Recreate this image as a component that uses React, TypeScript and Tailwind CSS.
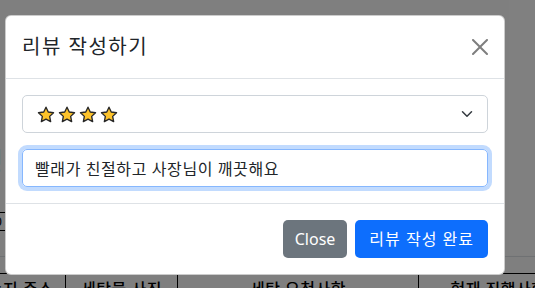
import React from "react";

const Star = () => (
  <svg width="18" height="17" viewBox="0 0 24 23" className="block">
    <path
      d="M12 1.6l3.05 6.55 7.15.95-5.25 4.95 1.35 7.1L12 17.7l-6.3 3.45 1.35-7.1L1.8 9.1l7.15-.95z"
      fill="#fdc32a"
      stroke="#262626"
      strokeWidth="1.8"
      strokeLinejoin="round"
    />
  </svg>
);

const columns = [
  { name: "배송지 주소", w: "w-[105px]" },
  { name: "세탁물 사진", w: "w-[112px]" },
  { name: "세탁 요청사항", w: "w-[241px]" },
  { name: "현재 진행사항", w: "w-[160px]" },
];

const App = () => {
  const [review, setReview] = React.useState<string>("빨래가 친절하고 사장님이 깨끗해요");

  return (
    <div className="relative w-[535px] h-[288px] overflow-hidden bg-white text-[#212529] font-['Noto_Sans','Noto_Sans_CJK_KR',sans-serif]">
      {/* page behind the modal */}
      <div className="pt-[144px]">
        <h2 className="-ml-[49px] text-[28px] leading-[36px] font-semibold text-black">신청</h2>
        <div className="mt-[32px] -ml-[13px] w-[300px] h-[19px] border-y border-black text-[13px] leading-[17px] text-black">
          30
        </div>
        <div className="mt-[25px] border-t border-[#dee2e6]" />
        <table className="mt-[16px] -ml-[40px] w-[618px] table-fixed border-collapse text-black">
          <thead>
            <tr className="border-t border-black">
              {columns.map((c, i) => (
                <th
                  key={i}
                  className={`${c.w} border-x border-black pt-[3px] text-[16px] leading-[24px] font-medium tracking-[0.5px] text-center whitespace-nowrap`}
                >
                  {c.name}
                </th>
              ))}
            </tr>
          </thead>
        </table>
      </div>

      {/* backdrop */}
      <div className="absolute inset-0 bg-black/50" />

      {/* modal */}
      <div className="absolute left-[5px] top-[15px] w-[500px] bg-white border border-black/20 rounded-[6px]">
        <div className="flex items-center justify-between p-4 border-b border-[#dee2e6]">
          <h5 className="text-[20px] leading-[30px] font-normal tracking-[1.5px]">리뷰 작성하기</h5>
          <button className="w-4 h-4 opacity-50">
            <svg width="16" height="16" viewBox="0 0 16 16" className="block">
              <path
                d="M.293.293a1 1 0 011.414 0L8 6.586 14.293.293a1 1 0 111.414 1.414L9.414 8l6.293 6.293a1 1 0 01-1.414 1.414L8 9.414l-6.293 6.293a1 1 0 01-1.414-1.414L6.586 8 .293 1.707a1 1 0 010-1.414z"
                fill="#000"
              />
            </svg>
          </button>
        </div>

        <div className="p-4">
          <div className="flex items-center justify-between h-[38px] pl-[14px] pr-[14px] border border-[#ced4da] rounded-[5px]">
            <div className="flex gap-[3px]">
              <Star />
              <Star />
              <Star />
              <Star />
            </div>
            <svg width="12" height="12" viewBox="0 0 16 16" className="block">
              <path
                d="m2 5 6 6 6-6"
                fill="none"
                stroke="#343a40"
                strokeWidth="2"
                strokeLinecap="round"
                strokeLinejoin="round"
              />
            </svg>
          </div>
          <input
            value={review}
            onChange={(e) => setReview(e.target.value)}
            className="mt-4 block w-full h-[38px] px-3 text-[16px] tracking-[0.6px] text-[#212529] border border-[#86b7fe] rounded-[5px] outline-none shadow-[0_0_0_4px_rgba(13,110,253,0.25)]"
          />
        </div>

        <div className="flex justify-end gap-2 px-4 py-4 border-t border-[#dee2e6]">
          <button className="h-[38px] px-3 text-[16px] text-white bg-[#6c757d] rounded-[5px]">Close</button>
          <button className="h-[38px] px-[14px] text-[16px] tracking-[1px] text-white bg-[#0d6efd] rounded-[5px]">리뷰 작성 완료</button>
        </div>
      </div>
    </div>
  );
};

export default App;
